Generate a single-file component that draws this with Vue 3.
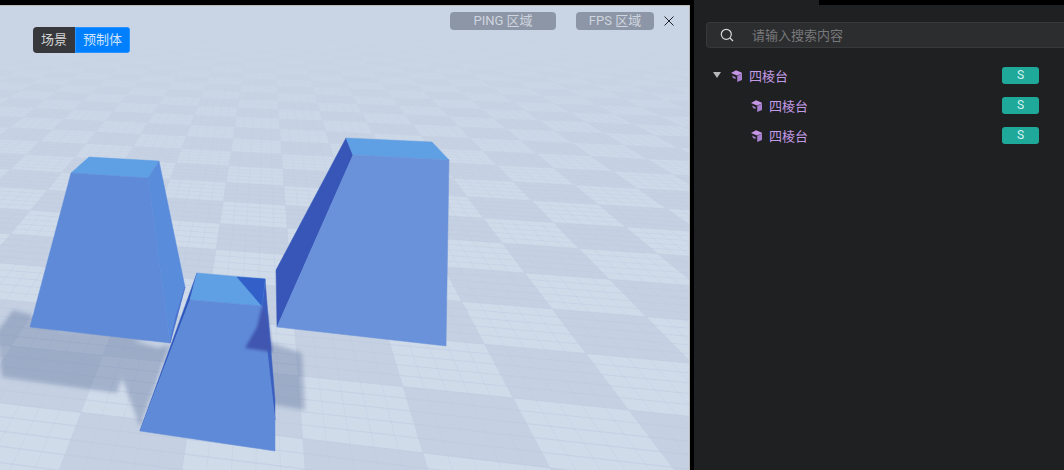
<script setup>
const vp1 = [265, -70]
const vp2 = [-4000, -70]
const origin = [513, 398]
const a = 0.026
const b = 0.005

function project(u, v) {
  const d = 1 + u * a + v * b
  return [
    (origin[0] + u * a * vp1[0] + v * b * vp2[0]) / d,
    (origin[1] + u * a * vp1[1] + v * b * vp2[1]) / d,
  ]
}

function pts(list) {
  return list.map((p) => p[0].toFixed(1) + ',' + p[1].toFixed(1)).join(' ')
}

const U_MIN = -10
const U_MAX = 200
const V_MIN = -105
const V_MAX = 95
const BLOCK = 5

// big checker blocks of the floor, only the darker ones are drawn
const blocks = []
for (let i = U_MIN / BLOCK; i < U_MAX / BLOCK; i++) {
  for (let j = V_MIN / BLOCK; j < V_MAX / BLOCK; j++) {
    if ((i + j) % 2 === 0) continue
    blocks.push(pts([
      project(i * BLOCK, j * BLOCK),
      project((i + 1) * BLOCK, j * BLOCK),
      project((i + 1) * BLOCK, (j + 1) * BLOCK),
      project(i * BLOCK, (j + 1) * BLOCK),
    ]))
  }
}

const lines = []
for (let u = U_MIN; u <= U_MAX; u++) {
  const s = project(u, V_MIN)
  const e = project(u, V_MAX)
  lines.push({ x1: s[0], y1: s[1], x2: e[0], y2: e[1], w: 1.1 / (1 + u * a) })
}
for (let v = V_MIN; v <= V_MAX; v++) {
  const s = project(U_MIN, v)
  const e = project(U_MAX, v)
  lines.push({ x1: s[0], y1: s[1], x2: e[0], y2: e[1], w: 0.7 })
}

const faces = [
  { id: 'b1-top', fill: '#5f9fe4', points: '89,157 159,161 148,178 71,173' },
  { id: 'b1-side', fill: '#5a8cdc', points: '159,161 185,287 170,343 148,178' },
  { id: 'b1-front', fill: '#5e8ad8', points: '71,173 148,178 170,343 30,327' },
  { id: 'b1-dark', fill: '#4a70cc', points: '185,287 170,343 176,316' },
  { id: 'b3-side', fill: '#3757b8', points: '346,138 353,155 277,327 276,270' },
  { id: 'b3-top', fill: '#5f9fe4', points: '346,138 432,142 449,160 353,155' },
  { id: 'b3-front', fill: '#6b92da', points: '353,155 449,160 446,346 277,327' },
  { id: 'b2-left', fill: '#2f57bd', points: '197,273 190,300 140,431' },
  { id: 'b2-right', fill: '#3a5fc0', points: '265,279 275,400 275,420 262,306' },
  { id: 'b2-top', fill: '#5f9fe4', points: '197,273 265,279 262,306 190,300' },
  { id: 'b2-top-dark', fill: '#3060c8', points: '237,277 265,279 262,306' },
  { id: 'b2-front', fill: '#5f8ad8', points: '190,300 262,306 275,420 275,451 140,431' },
]

const rows = [
  { id: 1, name: '四棱台', child: false },
  { id: 2, name: '四棱台', child: true },
  { id: 3, name: '四棱台', child: true },
]
</script>

<template>
  <div class="page">
    <section class="viewport">
      <svg class="scene" viewBox="0 0 689 464" width="689" height="464">
        <defs>
          <filter id="soft" x="-10%" y="-10%" width="120%" height="120%">
            <feGaussianBlur stdDeviation="2" />
          </filter>
          <filter id="soft-small" x="-20%" y="-20%" width="140%" height="140%">
            <feGaussianBlur stdDeviation="1.5" />
          </filter>
          <filter id="floor-blur" x="0" y="0" width="100%" height="100%">
            <feGaussianBlur stdDeviation="0.6" />
          </filter>
          <filter id="edge-blur" x="-5%" y="-5%" width="110%" height="110%">
            <feGaussianBlur stdDeviation="0.35" />
          </filter>
          <linearGradient id="far" x1="0" y1="0" x2="0" y2="1">
            <stop offset="0" stop-color="#c9d4e4" stop-opacity="1" />
            <stop offset="0.25" stop-color="#c9d4e4" stop-opacity="0.9" />
            <stop offset="0.55" stop-color="#c9d4e4" stop-opacity="0.45" />
            <stop offset="1" stop-color="#c9d4e4" stop-opacity="0" />
          </linearGradient>
        </defs>
        <g transform="translate(0 -6)">
          <rect x="0" y="0" width="689" height="470" fill="#d0dbea" />
          <g filter="url(#floor-blur)">
            <polygon v-for="(p, i) in blocks" :key="i" :points="p" fill="#c5d1e2" />
            <line
              v-for="(l, i) in lines"
              :key="'l' + i"
              :x1="l.x1"
              :y1="l.y1"
              :x2="l.x2"
              :y2="l.y2"
              :stroke-width="l.w"
              stroke="#bccadf"
              stroke-opacity="0.55"
            />
          </g>
          <rect x="0" y="0" width="689" height="230" fill="url(#far)" />
          <g filter="url(#soft)" fill="#5a6f98" fill-opacity="0.38">
            <polygon points="13,310 36,316 60,330 165,335 133,341 158,348 170,345 140,427 122,378 117,393 2,377 -4,333" />
            <polygon points="262,340 302,353 305,410 262,403" />
          </g>
          <g filter="url(#edge-blur)">
            <polygon
              v-for="f in faces"
              :key="f.id"
              :points="f.points"
              :fill="f.fill"
              :stroke="f.fill"
              stroke-width="0.5"
            />
          </g>
          <polygon
            points="262,306 267,314 272,352 245,348 257,327"
            fill="#4056b0"
            filter="url(#soft-small)"
          />
        </g>
      </svg>

      <div class="mode-switch">
        <span class="mode">场景</span>
        <span class="mode active">预制体</span>
      </div>
      <span class="stat ping">PING 区域</span>
      <span class="stat fps">FPS 区域</span>
      <svg class="close" viewBox="0 0 10 10" width="10" height="10">
        <path d="M.5.5l9 9M9.5.5l-9 9" stroke="#22262c" stroke-width="1" fill="none" />
      </svg>
    </section>

    <aside class="panel">
      <div class="top-notch"></div>
      <div class="search">
        <svg viewBox="0 0 14 14" width="14" height="14">
          <circle cx="6.3" cy="6.3" r="5" stroke="#d8d8d8" stroke-width="1.2" fill="none" />
          <path d="M10 10l3 3" stroke="#d8d8d8" stroke-width="1.2" fill="none" />
        </svg>
        <span class="placeholder">请输入搜索内容</span>
      </div>
      <ul class="tree">
        <li v-for="row in rows" :key="row.id" class="row" :class="{ child: row.child }">
          <span v-if="!row.child" class="caret"></span>
          <svg class="cube" viewBox="0 0 11 12" width="11" height="12">
            <path d="M0 3 5 .3 11 2.800v.6L6 5.600z" fill="#c596e6" />
            <path d="M6.200 6 11 3.600V10L6.200 12z" fill="#a67fce" />
            <path d="M1 5.400 4.600 7.200V9L2 8z" fill="#a67fce" />
          </svg>
          <span class="name">{{ row.name }}</span>
          <span class="badge">S</span>
        </li>
      </ul>
    </aside>
  </div>
</template>

<style scoped>
.page {
  display: flex;
  width: 1064px;
  height: 470px;
  overflow: hidden;
  background: #000;
  font-family: Roboto, "Noto Sans CJK SC", sans-serif;
}

.viewport {
  position: relative;
  flex: none;
  width: 689px;
  height: 464px;
  margin-top: 5px;
  padding-top: 1px;
  background: #b9b9b6;
  border-right: 1px solid #b9b9b6;
}

.scene {
  display: block;
}

.mode-switch {
  position: absolute;
  top: 22px;
  left: 33px;
  display: flex;
  height: 26px;
  border-radius: 4px;
  overflow: hidden;
  font-size: 13px;
  line-height: 26px;
}

.mode {
  padding: 0 8px;
  background: #36383b;
  color: #d4d4d4;
}

.mode.active {
  background: #007fff;
  color: #cfe4fb;
  box-shadow: inset 0 0 0 1px #2b95ff;
}

.stat {
  position: absolute;
  top: 7px;
  height: 18px;
  border-radius: 4px;
  background: #8d96a6;
  color: #cfd5df;
  font-size: 13px;
  line-height: 18px;
  text-align: center;
}

.ping {
  left: 450px;
  width: 106px;
}

.fps {
  left: 576px;
  width: 78px;
}

.close {
  position: absolute;
  top: 11px;
  left: 664px;
}

.panel {
  position: relative;
  flex: none;
  width: 370px;
  margin-left: 4px;
  background: #1f2022;
}

.top-notch {
  position: absolute;
  top: 0;
  right: 0;
  width: 245px;
  height: 5px;
  background: #000;
}

.search {
  display: flex;
  align-items: center;
  box-sizing: border-box;
  height: 26px;
  margin: 22px 0 0 12px;
  padding-left: 13px;
  border: 1px solid #38393b;
  border-right: 0;
  border-radius: 4px 0 0 4px;
  background: #2c2d2f;
}

.placeholder {
  margin: -2px 0 0 18px;
  color: #78797b;
  font-size: 13px;
}

.tree {
  margin: 12px 0 0;
  padding: 0;
  list-style: none;
}

.row {
  display: flex;
  align-items: center;
  height: 30px;
  padding-left: 37px;
  color: #c39be6;
  font-size: 13px;
}

.row.child {
  padding-left: 57px;
}

.caret {
  position: absolute;
  left: 19px;
  width: 0;
  height: 0;
  border-top: 6px solid #b8b8b8;
  border-left: 4px solid transparent;
  border-right: 4px solid transparent;
}

.cube {
  margin-top: 2px;
}

.name {
  margin-left: 7px;
}

.badge {
  position: absolute;
  left: 308px;
  width: 37px;
  height: 17px;
  border-radius: 3px;
  background: #1fa99b;
  color: #d5f2ee;
  font-size: 12px;
  line-height: 17px;
  text-align: center;
}
</style>
